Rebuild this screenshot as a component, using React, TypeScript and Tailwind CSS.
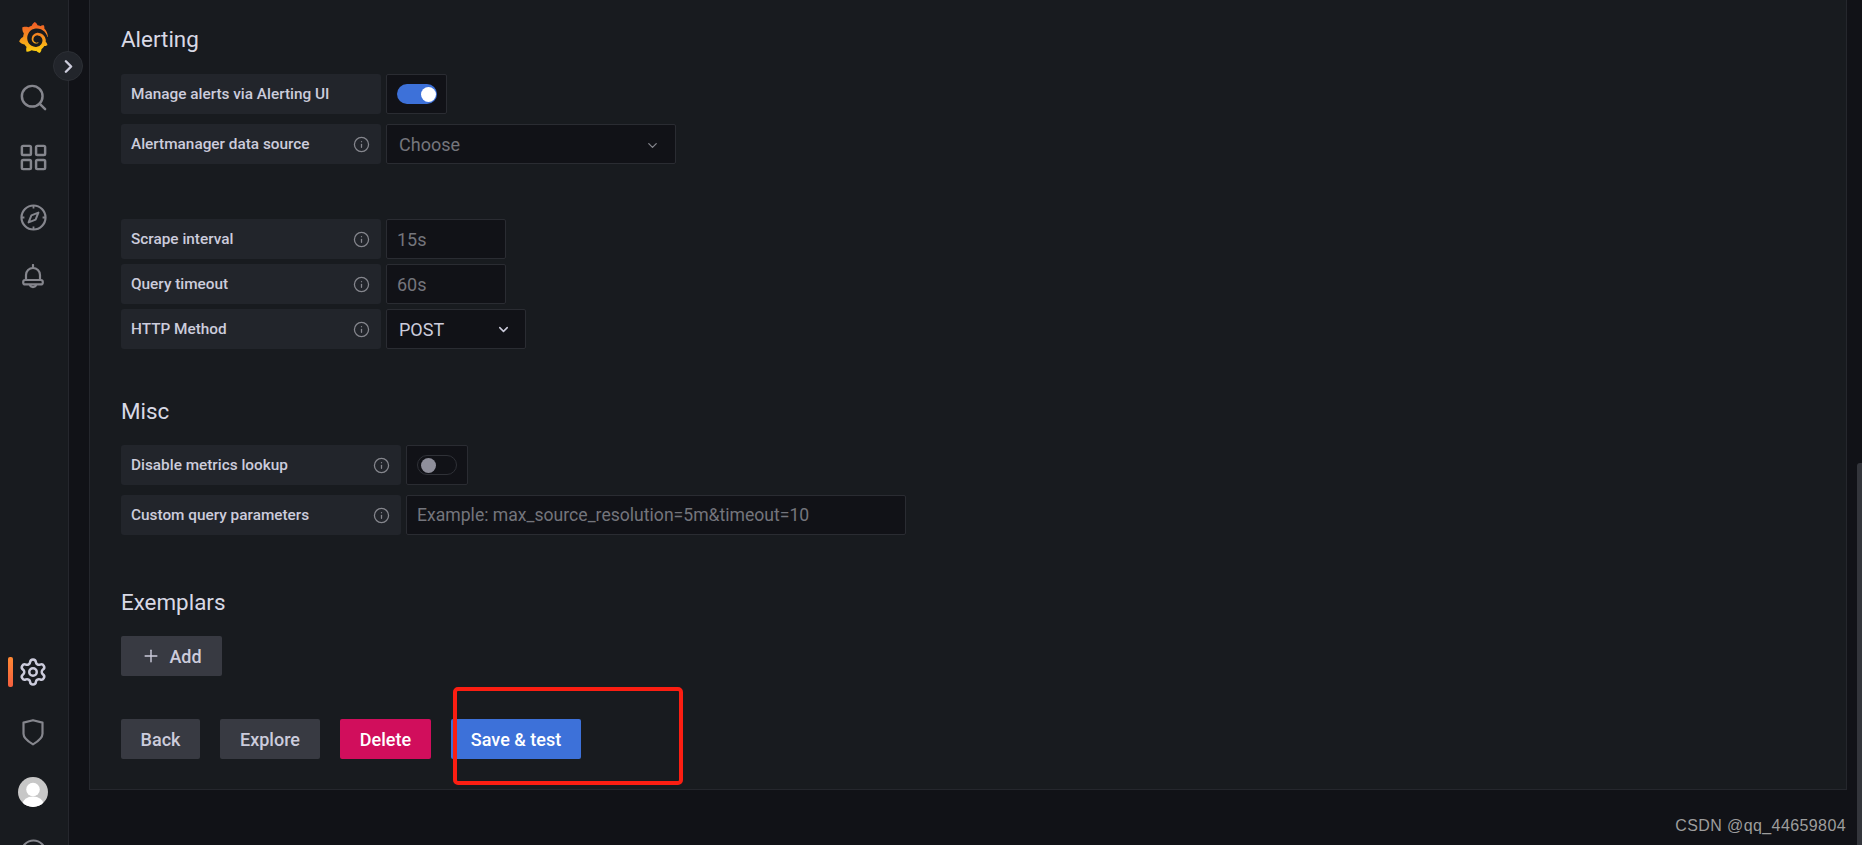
import type { ReactNode } from "react";
import { SiGrafana } from "react-icons/si";
import { ChevronDown, ChevronRight, Info, LayoutGrid, Plus, Search, Settings } from "lucide-react";

function NavItem({ children }: { children: ReactNode }) {
  return <div className="relative flex h-[60px] w-full shrink-0 items-center justify-center text-[#85868d]">{children}</div>;
}

function Label({ text, info = true, className }: { text: string; info?: boolean; className: string }) {
  return (
    <div className={`flex h-10 shrink-0 items-center justify-between rounded-[3px] bg-[#22252b] pl-[10px] pr-[11px] text-[15.35px] font-medium text-[#ccccdc] ${className}`}>
      <span className="pt-[2px]">{text}</span>
      {info && <Info size={17} strokeWidth={1.8} className="text-[#85868d]" />}
    </div>
  );
}

function Field({ children, className }: { children: ReactNode; className: string }) {
  return (
    <div className={`flex h-10 items-center rounded-[2px] border border-[#2a2c32] bg-[#111217] text-[18px] ${className}`}>
      {children}
    </div>
  );
}

function Heading({ children, className }: { children: ReactNode; className: string }) {
  return <h3 className={`h-7 text-[22.4px] leading-7 font-normal text-[#d8d9e5] ${className}`}>{children}</h3>;
}

function Btn({ children, className }: { children: ReactNode; className: string }) {
  return (
    <button className={`flex h-10 items-center justify-center rounded-[2px] text-[18px] font-medium ${className}`}>
      {children}
    </button>
  );
}

export default function App() {
  return (
    <div className="relative flex h-screen w-full overflow-hidden bg-[#111217] font-['Roboto',sans-serif] text-[#ccccdc]">
      <svg width="0" height="0" className="absolute">
        <defs>
          <linearGradient id="grafana-grad" x1="0" y1="1" x2="0" y2="0">
            <stop offset="0" stopColor="#fcd30f" />
            <stop offset="0.55" stopColor="#f58a1f" />
            <stop offset="1" stopColor="#f05a28" />
          </linearGradient>
        </defs>
      </svg>

      <aside className="flex h-full w-[69px] shrink-0 flex-col items-center overflow-hidden border-r border-[#25272d] bg-[#181b1f] pr-[2px] pt-[7px]">
        <NavItem>
          <SiGrafana size={31} className="fill-[url(#grafana-grad)]" />
        </NavItem>
        <NavItem>
          <Search size={31} strokeWidth={1.9} />
        </NavItem>
        <NavItem>
          <LayoutGrid size={31} strokeWidth={1.9} />
        </NavItem>
        <NavItem>
          <svg width="27" height="27" viewBox="0 0 27 27" fill="none" stroke="currentColor" strokeWidth="2.2">
            <circle cx="13.5" cy="13.5" r="12" />
            <path d="M18.4 8.600 15.600 15.600 8.600 18.400 11.400 11.400Z" strokeWidth="2" strokeLinejoin="round" />
            <path d="M13.5 2v2.400M13.5 22.600V25M2 13.500h2.400M22.600 13.500H25" strokeWidth="1.8" />
          </svg>
        </NavItem>
        <NavItem>
          <svg width="22" height="27" viewBox="0 0 22 27" fill="none" stroke="currentColor" strokeWidth="2.2" strokeLinejoin="round">
            <path d="M11 1v3" strokeLinecap="round" />
            <path d="M4 16V11a7 7 0 0 1 14 0v5" />
            <rect x="1.200" y="16" width="19.600" height="4.400" rx="2" />
            <path d="M7.800 20.600a3.300 3.300 0 0 0 6.400 0" />
          </svg>
        </NavItem>

        <div className="mt-[335px] w-full shrink-0">
          <NavItem>
            <div className="absolute left-[8px] top-[15px] h-[30px] w-[5px] rounded-[2px] bg-gradient-to-b from-[#ff8833] to-[#f55f3e]" />
            <Settings size={30} strokeWidth={2} className="text-[#ccccdc]" />
          </NavItem>
          <NavItem>
            <svg width="22" height="27" viewBox="0 0 22 27" fill="none" stroke="currentColor" strokeWidth="2.2" strokeLinejoin="round">
              <path d="M1.500 3.600 11 1.200l9.500 2.400v11.200c0 3.600-4 7.400-9.500 10.600C5.500 22.200 1.500 18.400 1.500 14.800Z" />
            </svg>
          </NavItem>
          <NavItem>
            <svg width="30" height="30" viewBox="0 0 30 30">
              <defs>
                <clipPath id="avatar-clip">
                  <circle cx="15" cy="15" r="15" />
                </clipPath>
              </defs>
              <g clipPath="url(#avatar-clip)">
                <rect width="30" height="30" fill="#c7c7c7" />
                <circle cx="15" cy="12.500" r="6.800" fill="#fff" />
                <ellipse cx="15" cy="27" rx="10.500" ry="7.500" fill="#fff" />
              </g>
            </svg>
          </NavItem>
          <NavItem>
            <svg width="27" height="27" viewBox="0 0 27 27" fill="none" stroke="currentColor" strokeWidth="2">
              <circle cx="13.500" cy="13.500" r="12" />
            </svg>
          </NavItem>
        </div>
      </aside>

      <div className="absolute left-[53px] top-[51px] z-10 flex h-[30px] w-[30px] items-center justify-center rounded-full border border-[#2c2f35] bg-[#22252b] text-[#ccccdc]">
        <ChevronRight size={21} strokeWidth={2.8} />
      </div>

      <main className="ml-[20px] h-[790px] w-[1758px] shrink-0 border-x border-b border-[#25272d] bg-[#181b1f] pl-[31px] pt-[25px]">
        <Heading className="">Alerting</Heading>
        <div className="mt-[21px] flex flex-col gap-[10px]">
          <div className="flex gap-[5px]">
            <Label text="Manage alerts via Alerting UI" info={false} className="w-[260px]" />
            <Field className="w-[61px] justify-center">
              <div className="relative h-5 w-10 rounded-full bg-[#3d71d9]">
                <div className="absolute right-[1px] top-[2.500px] h-[15px] w-[15px] rounded-full bg-white" />
              </div>
            </Field>
          </div>
          <div className="flex gap-[5px]">
            <Label text="Alertmanager data source" className="w-[260px]" />
            <Field className="w-[290px] justify-between pl-[12px] pr-[15px] text-[#74757c]">
              <span>Choose</span>
              <ChevronDown size={15} strokeWidth={2} className="mt-[2px] text-[#85868d]" />
            </Field>
          </div>
        </div>

        <div className="mt-[55px] flex flex-col gap-[5px]">
          <div className="flex gap-[5px]">
            <Label text="Scrape interval" className="w-[260px]" />
            <Field className="w-[120px] pl-[10px] text-[#74757c]">15s</Field>
          </div>
          <div className="flex gap-[5px]">
            <Label text="Query timeout" className="w-[260px]" />
            <Field className="w-[120px] pl-[10px] text-[#74757c]">60s</Field>
          </div>
          <div className="flex gap-[5px]">
            <Label text="HTTP Method" className="w-[260px]" />
            <Field className="w-[140px] justify-between pl-[12px] pr-[14px] text-[#ccccdc]">
              <span>POST</span>
              <ChevronDown size={15} strokeWidth={2.4} />
            </Field>
          </div>
        </div>

        <Heading className="mt-[48px]">Misc</Heading>
        <div className="mt-[20px] flex flex-col gap-[10px]">
          <div className="flex gap-[5px]">
            <Label text="Disable metrics lookup" className="w-[280px]" />
            <Field className="w-[62px] justify-center">
              <div className="relative h-5 w-10 rounded-full border border-[#2f3137] bg-[#111217]">
                <div className="absolute left-[3px] top-[1.500px] h-[15px] w-[15px] rounded-full bg-[#8f8f9b]" />
              </div>
            </Field>
          </div>
          <div className="flex gap-[5px]">
            <Label text="Custom query parameters" className="w-[280px]" />
            <Field className="w-[500px] pl-[10px] !text-[17.6px] text-[#74757c]">Example: max_source_resolution=5m&amp;timeout=10</Field>
          </div>
        </div>

        <Heading className="mt-[53px]">Exemplars</Heading>
        <Btn className="mt-[20px] w-[101px] gap-[8px] bg-[#383a42] text-[#ccccdc]">
          <Plus size={20} strokeWidth={1.7} />
          <span>Add</span>
        </Btn>

        <div className="mt-[43px] flex gap-[20px]">
          <Btn className="w-[79px] bg-[#383a42] text-[#ccccdc]">Back</Btn>
          <Btn className="w-[100px] bg-[#383a42] text-[#ccccdc]">Explore</Btn>
          <Btn className="w-[91px] bg-[#d10e5c] text-white">Delete</Btn>
          <Btn className="w-[130px] bg-[#3d71d9] text-white">Save &amp; test</Btn>
        </div>
      </main>

      {/* annotation drawn over the screenshot */}
      <div className="absolute left-[453px] top-[687px] z-10 h-[98px] w-[230px] rounded-[5px] border-4 border-[#fb1e12]" />
      <div className="absolute right-0 top-[463px] h-[382px] w-[5px] rounded-tl-[3px] bg-[#33353b]" />
      <div className="absolute right-[16px] top-[816px] font-['Liberation_Sans',sans-serif] text-[16px] leading-5 tracking-[0.4px] text-[#9d9d9d]">
        CSDN @qq_44659804
      </div>
    </div>
  );
}
